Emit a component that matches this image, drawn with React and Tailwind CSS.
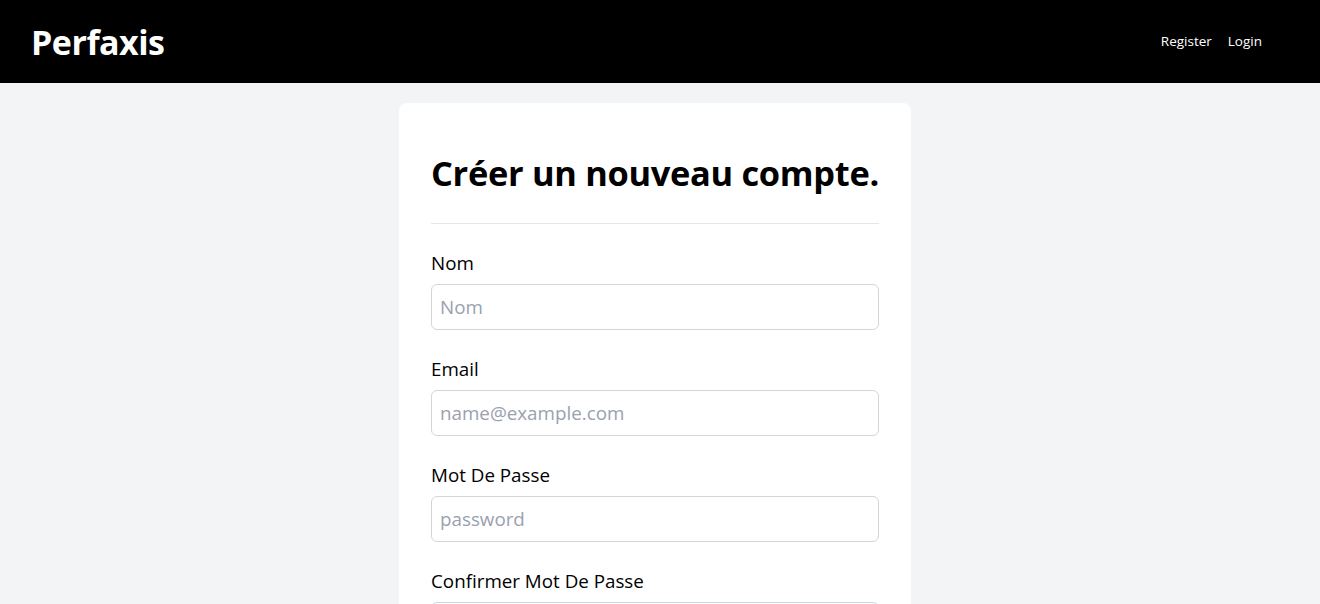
export default function App() {
  const fields = [
    { label: "Nom", ph: "Nom", type: "text" },
    { label: "Email", ph: "name@example.com", type: "email" },
    { label: "Mot De Passe", ph: "password", type: "password" },
    { label: "Confirmer Mot De Passe", ph: "password", type: "password" },
  ];
  return (
    <div className="min-h-screen bg-gray-100 font-['Open_Sans',sans-serif] text-black">
      <header className="flex h-[83px] items-center justify-between bg-black pl-[31px] pr-[58px]">
        <span className="text-[34px] font-bold leading-none tracking-[-0.5px] text-white">Perfaxis</span>
        <nav className="flex gap-4 text-[13.5px] text-white">
          <a>Register</a>
          <a>Login</a>
        </nav>
      </header>
      <main className="flex justify-center pr-[10px] pt-5">
        <div className="w-[512px] rounded-lg bg-white px-8 pb-8 pt-[46px]">
          <h1 className="text-[34.4px] font-bold leading-[48px] tracking-[-0.3px]">Créer un nouveau compte.</h1>
          <hr className="mt-[26px] border-gray-200" />
          <form className="mt-[25px] flex flex-col gap-[25px]">
            {fields.map((f) => (
              <div key={f.label} className="flex flex-col">
                <label className="text-[18.8px] leading-[28px]">{f.label}</label>
                <input
                  type={f.type}
                  placeholder={f.ph}
                  className="mt-[7px] h-[46px] rounded-md border border-gray-300 px-2 text-[18.8px] placeholder:text-gray-400"
                />
              </div>
            ))}
          </form>
        </div>
      </main>
    </div>
  );
}
